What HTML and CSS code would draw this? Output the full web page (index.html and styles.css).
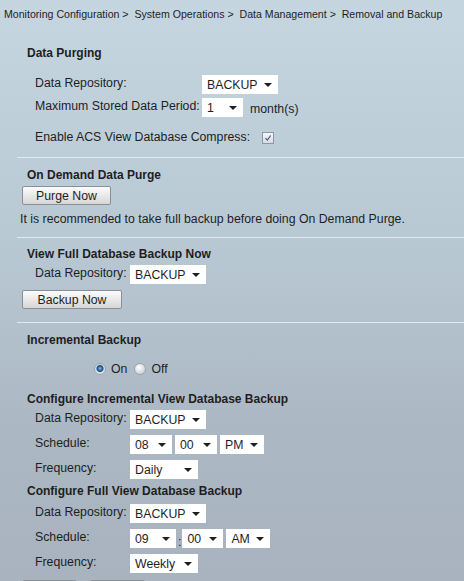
FILE: index.html
```html
<!DOCTYPE html>
<html lang="en">
<head>
    <meta charset="UTF-8">
    <title>Removal and Backup</title>
    <link rel="stylesheet" href="styles.css">
</head>
<body>
    <div class="crumb">Monitoring Configuration &gt;&nbsp; System Operations &gt;&nbsp; Data Management &gt;&nbsp; Removal and Backup</div>

    <div class="section first">
        <div class="title">Data Purging</div>
        <div class="purge-rows">
            <div class="row">
                <span class="label wide">Data Repository:</span>
                <span class="sel w76">BACKUP</span>
            </div>
            <div class="row">
                <span class="label wide">Maximum Stored Data Period:</span>
                <span class="sel w41">1</span>
                <span class="unit">month(s)</span>
            </div>
            <div class="row check-row">
                <span class="label">Enable ACS View Database Compress:</span>
                <span class="check">
                    <svg viewBox="0 0 12 12" width="12" height="12">
                        <path d="M3 6.2 L5.2 8.6 L9.2 3" fill="none" stroke="#4a5670" stroke-width="1.4"/>
                    </svg>
                </span>
            </div>
        </div>
    </div>

    <div class="section demand">
        <div class="title">On Demand Data Purge</div>
        <button class="btn purge">Purge Now</button>
        <p class="note">It is recommended to take full backup before doing On Demand Purge.</p>
    </div>

    <div class="section full-now">
        <div class="title">View Full Database Backup Now</div>
        <div class="row">
            <span class="label">Data Repository:</span>
            <span class="sel w76">BACKUP</span>
        </div>
        <button class="btn backup">Backup Now</button>
    </div>

    <div class="section incr">
        <div class="title">Incremental Backup</div>
        <div class="radios">
            <span class="radio on"></span><span class="radio-label">On</span>
            <span class="radio"></span><span class="radio-label">Off</span>
        </div>

        <div class="title sub">Configure Incremental View Database Backup</div>
        <div class="row">
            <span class="label">Data Repository:</span>
            <span class="sel w76">BACKUP</span>
        </div>
        <div class="row">
            <span class="label">Schedule:</span>
            <span class="sel w42">08</span>
            <span class="sel w42">00</span>
            <span class="sel w44">PM</span>
        </div>
        <div class="row">
            <span class="label">Frequency:</span>
            <span class="sel w68">Daily</span>
        </div>

        <div class="title sub2">Configure Full View Database Backup</div>
        <div class="row">
            <span class="label">Data Repository:</span>
            <span class="sel w76">BACKUP</span>
        </div>
        <div class="row">
            <span class="label">Schedule:</span>
            <span class="sel w46">09</span>
            <span class="colon">:</span>
            <span class="sel w41">00</span>
            <span class="sel w44">AM</span>
        </div>
        <div class="row">
            <span class="label">Frequency:</span>
            <span class="sel w68">Weekly</span>
        </div>

        <div class="actions">
            <button class="btn small"></button>
            <button class="btn small"></button>
        </div>
    </div>
</body>
</html>
```

FILE: styles.css
```css
html {
    background: linear-gradient(to bottom, #c5d6e1 0%, #b9c9d4 40%, #abb7c3 75%, #a8b3bf 100%);
    min-height: 100%;
}
body {
    font-family: "Liberation Sans", Arial, sans-serif;
    font-size: 12.3px;
    line-height: 16px;
    color: #1e1e1e;
    margin: 0;
    padding: 0;
    height: 581px;
    overflow: hidden;
}
.crumb {
    font-size: 10.6px;
    line-height: 14px;
    padding: 7px 0 0 4px;
    height: 15px;
    white-space: nowrap;
}
.section {
    margin-left: 17px;
    border-top: 1px solid #e3eaef;
}
.section.first {
    border-top: none;
    padding-top: 23px;
    height: 112px;
}
.title {
    font-weight: bold;
    font-size: 12px;
    padding-left: 10px;
    white-space: nowrap;
}
.purge-rows {
    margin-top: 14px;
}
.row {
    display: flex;
    align-items: flex-start;
    gap: 3px;
    height: 23px;
    padding-left: 18px;
}
.label {
    width: 92px;
    flex: none;
    white-space: nowrap;
}
.label.wide {
    width: 164px;
}
.check-row {
    margin-top: 8px;
}
.check-row .label {
    width: auto;
}
.check {
    width: 10px;
    height: 10px;
    margin: 3px 0 0 9px;
    border: 1px solid #8d98a4;
    background: linear-gradient(#f4f6f8, #d6dce2);
    display: flex;
    align-items: center;
    justify-content: center;
}
.check svg {
    width: 10px;
    height: 10px;
}
.unit {
    margin: 3px 0 0 4px;
}
.sel {
    position: relative;
    display: inline-block;
    box-sizing: border-box;
    height: 19px;
    margin-top: 0;
    padding: 2px 0 0 5px;
    background: #fff;
    line-height: 16px;
    flex: none;
}
.sel::after {
    content: "";
    position: absolute;
    right: 6px;
    top: 8px;
    border-left: 4px solid transparent;
    border-right: 4px solid transparent;
    border-top: 4px solid #1e1e1e;
}
.w41 { width: 41px; }
.w42 { width: 42px; }
.w44 { width: 44px; }
.w46 { width: 46px; }
.w68 { width: 68px; }
.w76 { width: 76px; }
.colon {
    margin: 5px -2px 0 -1px;
}
.btn {
    display: block;
    box-sizing: border-box;
    height: 19px;
    padding: 0;
    border: 1px solid #8b8f94;
    border-radius: 2px;
    background: linear-gradient(#fbfbfb, #e9e9e9 50%, #d6d6d6);
    font-family: "Liberation Sans", Arial, sans-serif;
    font-size: 12.3px;
    line-height: 16px;
    color: #1e1e1e;
}
.demand {
    padding-top: 9px;
    height: 70px;
}
.purge {
    width: 89px;
    margin: 3px 0 0 5px;
}
.note {
    margin: 6px 0 0 3px;
}
.full-now {
    padding-top: 8px;
    height: 76px;
}
.full-now .row {
    margin-top: 2px;
    height: 24px;
    padding-top: 1px;
}
.backup {
    width: 100px;
    margin: 1px 0 0 5px;
}
.incr {
    padding-top: 9px;
}
.radios {
    display: flex;
    align-items: center;
    margin: 13px 0 0 77px;
    height: 16px;
}
.radio {
    width: 10px;
    height: 10px;
    border-radius: 50%;
    border: 1px solid #9aa3ad;
    background: radial-gradient(circle at 40% 35%, #ffffff, #d2d6da 70%);
    box-sizing: content-box;
}
.radio.on {
    background: radial-gradient(circle at 50% 45%, #8fc0e8 0, #2a6aa8 2px, #1f4f80 3px, #cfd6dd 4px, #eef1f4 6px);
}
.radio-label {
    margin: 0 7px 0 5px;
}
.sub {
    margin-top: 14px;
    height: 19px;
}
.sub2 {
    margin-top: -2px;
    height: 21px;
}
.incr .row {
    height: 25px;
}
.actions {
    display: flex;
    gap: 13px;
    margin: 1px 0 0 5px;
}
.btn.small {
    width: 55px;
}
```
